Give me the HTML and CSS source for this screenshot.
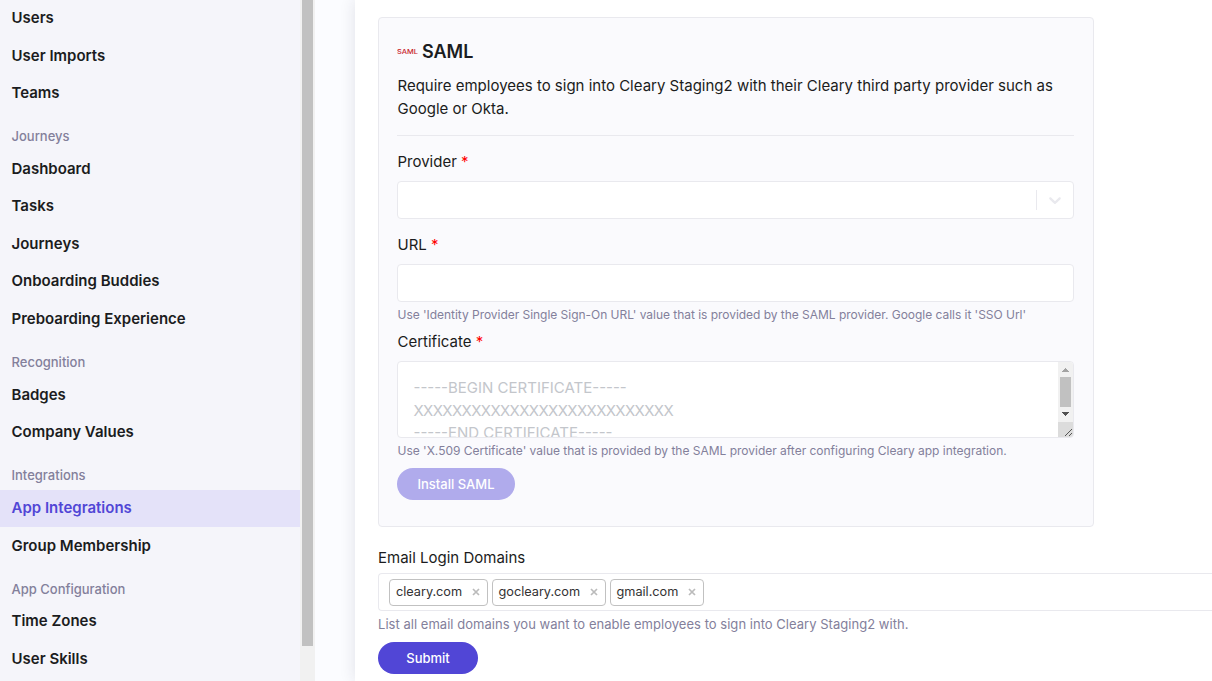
FILE: index.html
```html
<!DOCTYPE html>
<html lang="en">
<head>
    <meta charset="UTF-8">
    <meta name="viewport" content="width=device-width, initial-scale=1.0">
    <title>App Integrations</title>
    <link rel="stylesheet" href="styles.css">
</head>
<body>
    <div class="layout">
        <aside class="sidebar">
            <nav class="menu">
                <a class="menu-item">Users</a>
                <a class="menu-item">User Imports</a>
                <a class="menu-item">Teams</a>
                <h6 class="menu-title">Journeys</h6>
                <a class="menu-item">Dashboard</a>
                <a class="menu-item">Tasks</a>
                <a class="menu-item">Journeys</a>
                <a class="menu-item">Onboarding Buddies</a>
                <a class="menu-item">Preboarding Experience</a>
                <h6 class="menu-title">Recognition</h6>
                <a class="menu-item">Badges</a>
                <a class="menu-item">Company Values</a>
                <h6 class="menu-title">Integrations</h6>
                <a class="menu-item active">App Integrations</a>
                <a class="menu-item">Group Membership</a>
                <h6 class="menu-title">App Configuration</h6>
                <a class="menu-item">Time Zones</a>
                <a class="menu-item">User Skills</a>
            </nav>
            <div class="scrollbar"><div class="scrollbar-thumb"></div></div>
        </aside>

        <main class="content">
            <section class="card">
                <h2 class="card-title">
                    <svg class="saml-logo" width="22" height="8" viewBox="0 0 22 8"><text x="0" y="6" textLength="21" lengthAdjust="spacingAndGlyphs">SAML</text></svg>
                    SAML
                </h2>
                <p class="card-text">Require employees to sign into Cleary Staging2 with their Cleary third party provider such as Google or Okta.</p>
                <hr>
                <form>
                    <label>Provider <span class="required">*</span></label>
                    <div class="control select">
                        <span class="select-separator"></span>
                        <svg class="select-arrow" width="20" height="20" viewBox="0 0 20 20"><path d="M4.516 7.548c0.436-0.446 1.043-0.481 1.576 0l3.908 3.747 3.908-3.747c0.533-0.481 1.141-0.446 1.574 0 0.436 0.445 0.408 1.197 0 1.615-0.406 0.418-4.695 4.502-4.695 4.502-0.217 0.223-0.502 0.335-0.787 0.335s-0.57-0.112-0.789-0.335c0 0-4.287-4.084-4.695-4.502s-0.436-1.17 0-1.615z"/></svg>
                    </div>
                    <label class="label-url">URL <span class="required">*</span></label>
                    <input class="control" type="text">
                    <small class="help help-url">Use 'Identity Provider Single Sign-On URL' value that is provided by the SAML provider. Google calls it 'SSO Url'</small>
                    <label class="label-certificate">Certificate <span class="required">*</span></label>
                    <div class="control certificate">
                        <div class="certificate-text">-----BEGIN CERTIFICATE-----<br><span class="certificate-body">XXXXXXXXXXXXXXXXXXXXXXXXXXX</span><br>-----END CERTIFICATE-----</div>
                        <svg class="certificate-bar" width="15" height="75" viewBox="0 0 15 75" shape-rendering="crispEdges">
                            <rect width="15" height="60" fill="#f1f1f1"/>
                            <path d="M4 10h7v-1h-1v-1h-1v-1h-1v-1h-1v1h-1v1h-1v1h-1z" fill="#a3a3a3"/>
                            <rect x="2" y="15" width="11" height="30" fill="#c1c1c1"/>
                            <path d="M4 50h7v1h-1v1h-1v1h-1v1h-1v-1h-1v-1h-1v-1h-1z" fill="#505050"/>
                            <rect y="60" width="15" height="15" fill="#dcdcdc"/>
                            <path d="M7 74l7-7M11 74l3-3" fill="none" stroke="#555"/>
                        </svg>
                    </div>
                    <small class="help">Use 'X.509 Certificate' value that is provided by the SAML provider after configuring Cleary app integration.</small>
                    <button type="button" class="btn btn-install" disabled>Install SAML</button>
                </form>
            </section>

            <section class="domains">
                <label>Email Login Domains</label>
                <div class="control tags">
                    <span class="tag">cleary.com <svg width="8" height="8" viewBox="0 0 8 8"><path d="M1 1l6 6M7 1L1 7"/></svg></span>
                    <span class="tag">gocleary.com <svg width="8" height="8" viewBox="0 0 8 8"><path d="M1 1l6 6M7 1L1 7"/></svg></span>
                    <span class="tag">gmail.com <svg width="8" height="8" viewBox="0 0 8 8"><path d="M1 1l6 6M7 1L1 7"/></svg></span>
                </div>
                <small class="help help-domains">List all email domains you want to enable employees to sign into Cleary Staging2 with.</small>
                <button type="button" class="btn">Submit</button>
            </section>
        </main>
    </div>
</body>
</html>
```
FILE: styles.css
```css
* {
    box-sizing: border-box;
}
body {
    margin: 0;
    font-family: Inter, sans-serif;
    font-size: 15px;
    line-height: 22.5px;
    color: #1b1c20;
    background: #fbfcff;
    overflow: hidden;
}
.layout {
    display: flex;
    height: 681px;
    overflow: hidden;
}
.sidebar {
    display: flex;
    flex: 0 0 315px;
    background: #f5f5fa;
}
.menu {
    width: 300px;
    margin-top: -0.4px;
}
.menu-item {
    display: block;
    padding: 7.5px 11.5px;
    font-weight: 600;
}
.menu-item.active {
    background: #e4e2f9;
    color: #5146d6;
}
.menu-title {
    margin: 0;
    padding: 15px 11.5px 3.83px;
    font-size: 13px;
    line-height: 19.5px;
    font-weight: 500;
    color: #83809b;
}
.scrollbar {
    width: 15px;
    padding: 0 2px;
    background: #f1f1f1;
}
.scrollbar-thumb {
    height: 646px;
    background: #c1c1c1;
}
.content {
    flex: 1;
    min-width: 0;
    margin-left: 40px;
    padding: 17px 0 0 23px;
    background: #fff;
    box-shadow: 0 0 15px rgba(30, 30, 60, 0.12);
}
.card {
    width: 716px;
    height: 510px;
    padding: 22px 19px 0 18px;
    border: 1px solid #e9e9ee;
    border-radius: 4px;
    background: #fafafd;
}
.card-title {
    display: flex;
    align-items: center;
    margin: 0 0 10px;
    font-size: 18px;
    line-height: 24px;
    font-weight: 600;
}
.saml-logo {
    margin: 0 3px 1px 0;
    font-size: 6.5px;
    font-weight: 500;
    fill: #c8202a;
}
.card-text {
    margin: 0;
    padding-left: 0.5px;
    line-height: 23px;
}
hr {
    margin: 15px 0 14px;
    border: 0;
    border-top: 1px solid #e9e9ee;
}
label {
    display: block;
    margin-bottom: 8px;
    padding-left: 0.5px;
    line-height: 23px;
}
.required {
    color: #f00;
}
.control {
    display: block;
    width: 100%;
    height: 38px;
    border: 1px solid #e9e9ee;
    border-radius: 4px;
    background: #fff;
}
.select {
    display: flex;
    align-items: center;
    justify-content: flex-end;
}
.select-separator {
    width: 1px;
    height: 20px;
    background: #e9e9ee;
}
.select-arrow {
    margin: 0 8px;
    fill: #e9e9ee;
}
.label-url {
    margin-top: 14px;
}
.help {
    display: block;
    margin-top: 4px;
    padding-left: 0.5px;
    font-size: 12px;
    line-height: 18px;
    letter-spacing: -0.01px;
    color: #83809b;
}
.help-url {
    letter-spacing: -0.035px;
}
.label-certificate {
    margin-top: 6px;
}
.certificate {
    display: flex;
    height: 77px;
    overflow: hidden;
}
.certificate-text {
    flex: 1;
    height: 75px;
    padding: 15px 15.5px;
    color: #c3c6cb;
}
.certificate-body {
    letter-spacing: -0.62px;
}
.btn {
    display: block;
    width: 100px;
    height: 32px;
    margin-top: 8px;
    padding: 0 0 1px;
    border: 0;
    border-radius: 16px;
    background: #5146d6;
    color: #fff;
    font: 500 13px Inter, sans-serif;
}
.btn-install {
    width: 118px;
    background: #b0abec;
}
.domains {
    margin-top: 19px;
}
.domains label {
    margin-bottom: 4px;
    padding-left: 0;
}
.tags {
    display: flex;
    align-items: center;
    gap: 4px;
    padding-left: 10px;
    border-right: 0;
    border-radius: 4px 0 0 4px;
}
.tag {
    display: flex;
    align-items: center;
    height: 27px;
    padding: 1px 7px 0 6px;
    border: 1px solid #c1c1c1;
    border-radius: 4px;
    font-size: 12.75px;
    letter-spacing: -0.04px;
    color: #333;
}
.tag svg {
    margin: 0 0 1px 9.5px;
    stroke: #bbb;
    stroke-width: 1.7;
}
.help-domains {
    margin-top: 3px;
    padding-left: 0;
    font-size: 13px;
    line-height: 20px;
    letter-spacing: 0.03px;
}
```
